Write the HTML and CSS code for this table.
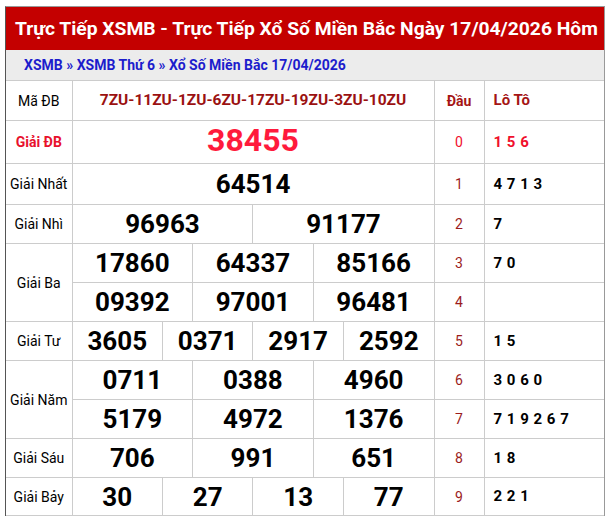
FILE: index.html
```html
<!DOCTYPE html>
<html lang="vi">
<head>
<meta charset="utf-8">
<title>XSMB 17/04/2026</title>
<link rel="stylesheet" href="styles.css">
</head>
<body>
<div class="box">
  <h1 class="title">Trực Tiếp XSMB - Trực Tiếp Xổ Số Miền Bắc Ngày 17/04/2026 Hôm</h1>
  <div class="crumb"><a href="#">XSMB</a> » <a href="#">XSMB Thứ 6</a> » <a href="#">Xổ Số Miền Bắc 17/04/2026</a></div>
  <table class="kq">
    <colgroup>
      <col class="c-lbl">
      <col class="c-sub"><col class="c-sub"><col class="c-sub"><col class="c-sub">
      <col class="c-sub"><col class="c-sub"><col class="c-sub"><col class="c-sub">
      <col class="c-sub"><col class="c-sub"><col class="c-sub"><col class="c-sub">
      <col class="c-dau">
      <col class="c-lt">
    </colgroup>
    <tr class="h40">
      <td class="lbl">Mã ĐB</td>
      <td class="code" colspan="12">7ZU-11ZU-1ZU-6ZU-17ZU-19ZU-3ZU-10ZU</td>
      <td class="hd dau-h">Đầu</td>
      <td class="lt lt-h">Lô Tô</td>
    </tr>
    <tr class="h43">
      <td class="lbl lbl-db">Giải ĐB</td>
      <td class="n db" colspan="12">38455</td>
      <td class="dau red">0</td>
      <td class="lt red">1 5 6</td>
    </tr>
    <tr class="h41">
      <td class="lbl">Giải Nhất</td>
      <td class="n" colspan="12">64514</td>
      <td class="dau">1</td>
      <td class="lt">4 7 1 3</td>
    </tr>
    <tr class="h39">
      <td class="lbl">Giải Nhì</td>
      <td class="n" colspan="6">96963</td>
      <td class="n" colspan="6">91177</td>
      <td class="dau">2</td>
      <td class="lt">7</td>
    </tr>
    <tr class="h39">
      <td class="lbl" rowspan="2">Giải Ba</td>
      <td class="n" colspan="4">17860</td>
      <td class="n" colspan="4">64337</td>
      <td class="n" colspan="4">85166</td>
      <td class="dau">3</td>
      <td class="lt">7 0</td>
    </tr>
    <tr class="h39">
      <td class="n" colspan="4">09392</td>
      <td class="n" colspan="4">97001</td>
      <td class="n" colspan="4">96481</td>
      <td class="dau">4</td>
      <td class="lt"></td>
    </tr>
    <tr class="h39">
      <td class="lbl">Giải Tư</td>
      <td class="n" colspan="3">3605</td>
      <td class="n" colspan="3">0371</td>
      <td class="n" colspan="3">2917</td>
      <td class="n" colspan="3">2592</td>
      <td class="dau">5</td>
      <td class="lt">1 5</td>
    </tr>
    <tr class="h39">
      <td class="lbl" rowspan="2">Giải Năm</td>
      <td class="n" colspan="4">0711</td>
      <td class="n" colspan="4">0388</td>
      <td class="n" colspan="4">4960</td>
      <td class="dau">6</td>
      <td class="lt">3 0 6 0</td>
    </tr>
    <tr class="h39">
      <td class="n" colspan="4">5179</td>
      <td class="n" colspan="4">4972</td>
      <td class="n" colspan="4">1376</td>
      <td class="dau">7</td>
      <td class="lt">7 1 9 2 6 7</td>
    </tr>
    <tr class="h39">
      <td class="lbl">Giải Sáu</td>
      <td class="n" colspan="4">706</td>
      <td class="n" colspan="4">991</td>
      <td class="n" colspan="4">651</td>
      <td class="dau">8</td>
      <td class="lt">1 8</td>
    </tr>
    <tr class="h38">
      <td class="lbl">Giải Bảy</td>
      <td class="n" colspan="3">30</td>
      <td class="n" colspan="3">27</td>
      <td class="n" colspan="3">13</td>
      <td class="n" colspan="3">77</td>
      <td class="dau">9</td>
      <td class="lt">2 2 1</td>
    </tr>
  </table>
</div>
</body>
</html>
```
FILE: styles.css
```css
html, body {
  margin: 0;
  padding: 0;
  background: #fff;
}
body {
  font-family: Roboto, "Noto Sans", Arial, sans-serif;
  color: #000;
}
.box {
  margin: 6px 0 0 5px;
  width: 600px;
  box-sizing: border-box;
  border: 1px solid #999;
  border-left-color: #555;
  border-bottom: none;
}
.title {
  margin: 0;
  height: 43px;
  line-height: 43px;
  padding-left: 9px;
  background: #c40000;
  color: #fff;
  font-size: 19.25px;
  font-weight: 700;
  white-space: nowrap;
  overflow: hidden;
}
.crumb {
  height: 30px;
  line-height: 30px;
  padding-left: 18px;
  background: #ececec;
  color: #1c1ccc;
  font-size: 14px;
  font-weight: 700;
}
.crumb a {
  color: #1c1ccc;
  text-decoration: none;
}
.kq {
  width: 598px;
  border-collapse: collapse;
  table-layout: fixed;
}
.c-lbl { width: 66px; }
.c-sub { width: 30.1667px; }
.c-dau { width: 50px; }
.c-lt { width: 120px; }
.kq td {
  border: 1px solid #ccc;
  padding: 0;
  text-align: center;
  vertical-align: middle;
  line-height: 1;
}
.h40 { height: 40px; }
.h43 { height: 43px; }
.h41 { height: 41px; }
.h39 { height: 39px; }
.h38 { height: 38px; }
.kq td.lbl {
  border-left: 0;
  font-size: 14px;
}
.kq td.lbl-db {
  color: #e8112d;
  font-weight: 700;
}
.code {
  color: #9b1111;
  font-size: 15.5px;
  font-weight: 700;
}
.hd {
  color: #a51515;
  font-weight: 700;
}
.dau-h {
  font-size: 14px;
}
.kq td.lt {
  border-right: 0;
  text-align: left;
  padding-left: 9px;
  font-size: 15px;
  font-weight: 700;
  letter-spacing: 0.5px;
}
.kq td.lt-h {
  color: #a51515;
  letter-spacing: 0;
}
.dau {
  font-size: 14px;
  color: #9b1c1c;
}
.kq td.red {
  color: #f0102c;
}
.n {
  font-size: 26px;
  font-weight: 700;
}
.kq td.db {
  font-size: 32px;
  color: #ff1a3c;
  padding-bottom: 5px;
}
```
